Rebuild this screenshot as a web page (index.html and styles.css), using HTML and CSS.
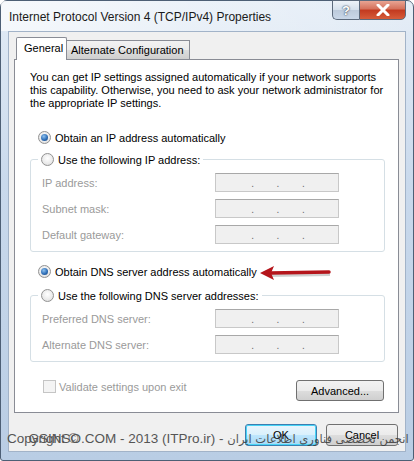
FILE: index.html
```html
<!DOCTYPE html>
<html lang="en">
<head>
  <meta charset="UTF-8" />
  <title>Internet Protocol Version 4 (TCP/IPv4) Properties</title>
  <link rel="stylesheet" href="styles.css">
</head>
<body>
  <div class="window">
    <div class="titlebar">
      <span class="title">Internet Protocol Version 4 (TCP/IPv4) Properties</span>
      <div class="caption-btns">
        <span class="cap help">?</span>
        <span class="cap close">
          <svg width="14" height="12" viewBox="0 0 14 12"><path d="M2 1 L12 11 M12 1 L2 11" stroke="#fff" stroke-width="3" stroke-linecap="round"/></svg>
        </span>
      </div>
    </div>

    <div class="client">
      <div class="tabs">
        <div class="tab active">General</div>
        <div class="tab">Alternate Configuration</div>
      </div>

      <div class="panel">
        <p class="intro">You can get IP settings assigned automatically if your network supports this capability. Otherwise, you need to ask your network administrator for the appropriate IP settings.</p>

        <div class="option first"><span class="radio checked"></span>Obtain an IP address automatically</div>

        <div class="group">
          <div class="legend"><span class="radio"></span>Use the following IP address:</div>
          <div class="field"><span>IP address:</span><div class="ipbox"><i>.</i><i>.</i><i>.</i></div></div>
          <div class="field"><span>Subnet mask:</span><div class="ipbox"><i>.</i><i>.</i><i>.</i></div></div>
          <div class="field"><span>Default gateway:</span><div class="ipbox"><i>.</i><i>.</i><i>.</i></div></div>
        </div>

        <div class="option dns"><span class="radio checked"></span>Obtain DNS server address automatically</div>

        <div class="group dns-group">
          <div class="legend"><span class="radio"></span>Use the following DNS server addresses:</div>
          <div class="field"><span>Preferred DNS server:</span><div class="ipbox"><i>.</i><i>.</i><i>.</i></div></div>
          <div class="field"><span>Alternate DNS server:</span><div class="ipbox"><i>.</i><i>.</i><i>.</i></div></div>
        </div>

        <div class="panel-foot">
          <div class="check"><span class="box"></span>Validate settings upon exit</div>
          <button class="btn adv">Advanced...</button>
        </div>
      </div>

      <div class="dialog-btns">
        <button class="btn ok">OK</button>
        <button class="btn">Cancel</button>
      </div>
    </div>

    <!-- red arrow drawn over the dialog -->
    <svg class="arrow" width="76" height="16" viewBox="0 0 76 16">
      <path d="M11 8 L70 7" stroke="#00000030" stroke-width="4" transform="translate(1 2)"/>
      <path d="M11 8 L70 7" stroke="#b5151b" stroke-width="3.5" stroke-linecap="round"/>
      <path d="M1 8 L15 1 L12 8 L15 15 Z" fill="#b5151b"/>
    </svg>

    <div class="watermark"><span class="copy">Copyright ©</span>GSINSO.COM - 2013 (ITPro.ir) - <span class="fa" dir="rtl">انجمن تخصصی فناوری اطلاعات ایران</span></div>
  </div>
</body>
</html>
```

FILE: styles.css
```css
* {
  box-sizing: border-box;
}
body {
  margin: 0;
  width: 414px;
  height: 461px;
  overflow: hidden;
  background: #fff;
  font-family: "Liberation Sans", Arial, sans-serif;
  font-size: 11px;
  color: #000;
}
.window {
  position: relative;
  width: 414px;
  height: 461px;
  border: 1px solid #4d5f75;
  border-radius: 7px 7px 3px 3px;
  background: linear-gradient(180deg, #e3ecf6 0%, #c9d9ec 40%, #b9cde4 100%);
  padding: 0 7px 8px 7px;
  display: flex;
  flex-direction: column;
}
.titlebar {
  height: 30px;
  display: flex;
  align-items: flex-start;
  justify-content: space-between;
  background: linear-gradient(90deg, rgba(255,255,255,0.7) 0%, rgba(255,255,255,0.3) 50%, rgba(255,255,255,0.1) 100%);
  margin: 0 -7px;
  padding: 0 7px 0 8px;
}
.title {
  margin-top: 9px;
  font-size: 12px;
  color: #1a1a1a;
}
.caption-btns {
  display: flex;
  margin-top: -1px;
}
.cap {
  height: 20px;
  border: 1px solid #5c6a7c;
  display: flex;
  align-items: center;
  justify-content: center;
}
.help {
  width: 27px;
  border-radius: 0 0 0 5px;
  border-right: none;
  background: linear-gradient(180deg, #eef3f9 0%, #d5e0ec 50%, #bccadb 51%, #c9d7e8 100%);
  color: #fff;
  font-weight: bold;
  font-size: 13px;
  text-shadow: 0 0 2px #3a4a60, 0 0 1px #3a4a60;
}
.close {
  width: 47px;
  border-radius: 0 0 5px 0;
  background: linear-gradient(180deg, #e8a493 0%, #d4705a 45%, #c2391f 50%, #d65c3a 100%);
}
.client {
  flex: 1;
  background: #f0f0f0;
  border: 1px solid #a2b3c8;
  display: flex;
  flex-direction: column;
  padding: 5px 6px 0 5px;
}
.tabs {
  display: flex;
  align-items: flex-end;
  height: 22px;
  padding-left: 2px;
  position: relative;
  z-index: 1;
}
.tab {
  height: 19px;
  padding: 3px 5px 0 4px;
  border: 1px solid #898c95;
  border-bottom: none;
  background: linear-gradient(180deg, #f2f2f2 0%, #ebebeb 50%, #dddddd 51%, #cfcfcf 100%);
  margin-left: -1px;
}
.tab.active {
  height: 23px;
  width: 51px;
  padding: 4px 0 0 7px;
  background: #fff;
  margin-bottom: -1px;
  margin-left: 0;
  border-radius: 2px 2px 0 0;
}
.panel {
  height: 354px;
  background: #fff;
  border: 1px solid #898c95;
  padding: 11px 13px 0 15px;
}
.intro {
  margin: 0;
  line-height: 13px;
}
.option {
  display: flex;
  align-items: center;
  height: 15px;
  padding-left: 8px;
}
.option.first {
  margin-top: 20px;
}
.option.dns {
  margin-top: 12px;
}
.radio {
  width: 13px;
  height: 13px;
  border-radius: 50%;
  border: 1px solid #929292;
  background: radial-gradient(circle at 50% 40%, #fff 0%, #eaeaea 60%, #d4d4d4 100%);
  margin-right: 4px;
  flex: none;
  display: inline-flex;
  align-items: center;
  justify-content: center;
}
.radio.checked::after {
  content: "";
  width: 7px;
  height: 7px;
  border-radius: 50%;
  background: radial-gradient(circle at 40% 35%, #8fc2ef 0%, #2f6fb8 55%, #123d73 100%);
}
.group {
  margin-top: 14px;
  border: 1px solid #d5dfe5;
  border-radius: 3px;
  padding: 0 45px 7px 11px;
}
.group.dns-group {
  margin-top: 16px;
}
.legend {
  display: flex;
  align-items: center;
  height: 15px;
  margin-top: -8px;
  margin-left: -4px;
  padding: 0 3px 0 3px;
  background: #fff;
  width: max-content;
  color: #000;
}
.field {
  display: flex;
  align-items: center;
  justify-content: space-between;
  color: #9a9a9a;
  height: 19px;
  margin-top: 7px;
}
.legend + .field {
  margin-top: 6px;
}
.ipbox {
  width: 124px;
  height: 19px;
  background: #f0f0f0;
  border: 1px solid #c8c8c8;
  border-top-color: #a8a8a8;
  display: flex;
  justify-content: space-around;
  align-items: flex-end;
  padding: 0 22px 2px 24px;
  color: #6a6a6a;
  font-size: 10px;
}
.ipbox i {
  font-style: normal;
}
.panel-foot {
  display: flex;
  justify-content: space-between;
  align-items: flex-start;
  margin-top: 18px;
  padding-left: 13px;
  padding-right: 1px;
}
.check {
  display: flex;
  align-items: center;
  color: #9a9a9a;
  margin-top: 0;
}
.box {
  width: 13px;
  height: 13px;
  border: 1px solid #c5c5c5;
  background: #f4f4f4;
  margin-right: 3px;
}
.btn {
  font-family: "Liberation Sans", Arial, sans-serif;
  font-size: 11px;
  color: #000;
  height: 21px;
  border: 1px solid #707070;
  border-radius: 3px;
  background: linear-gradient(180deg, #f2f2f2 0%, #ebebeb 50%, #dddddd 51%, #cfcfcf 100%);
  padding: 0;
}
.adv {
  width: 88px;
}
.dialog-btns {
  display: flex;
  justify-content: flex-end;
  gap: 9px;
  margin-top: 11px;
  padding-right: 1px;
}
.dialog-btns .btn {
  width: 72px;
  height: 22px;
}
.btn.ok {
  border-color: #3c7fb1;
  box-shadow: inset 0 0 0 1px #48d4f6;
  background: linear-gradient(180deg, #eaf6fd 0%, #d9f0fc 50%, #bee6fd 51%, #a7d9f5 100%);
}
.arrow {
  position: absolute;
  left: 258px;
  top: 264px;
}
.watermark {
  position: absolute;
  left: 6px;
  top: 430px;
  font-family: "Liberation Sans", Arial, sans-serif;
  font-size: 13.5px;
  color: #3a3a3a;
  white-space: nowrap;
  opacity: 0.85;
}
.copy {
  margin-right: -50px;
}
.fa {
  font-family: "DejaVu Sans", sans-serif;
  font-size: 11.5px;
}
```
